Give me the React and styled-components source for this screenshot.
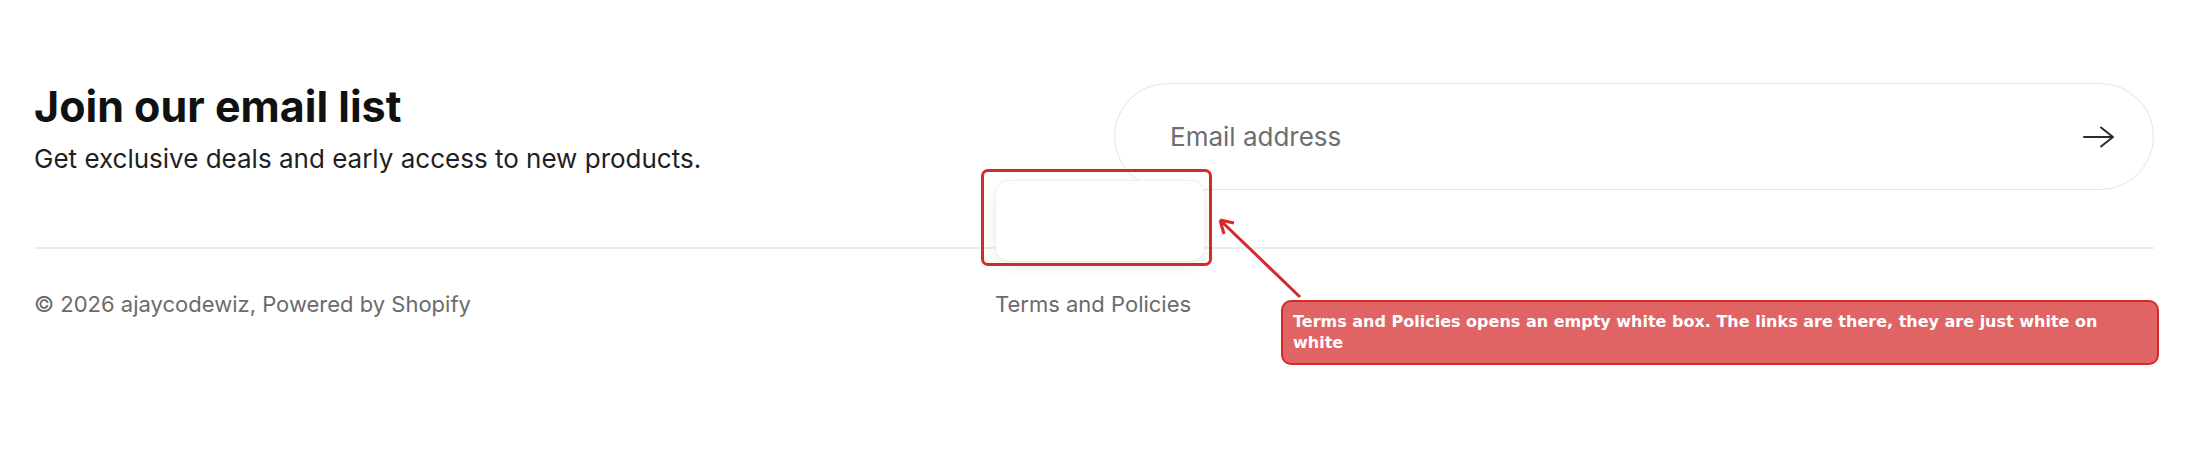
import React from "react";
import styled, { createGlobalStyle } from "styled-components";

const GlobalStyle = createGlobalStyle`
  * { box-sizing: border-box; }
  body {
    margin: 0;
    background: #ffffff;
    font-family: Inter, "Liberation Sans", Arial, sans-serif;
    color: #121212;
  }
`;

const Page = styled.div`
  position: relative;
  width: 2200px;
  height: 460px;
  padding: 80px 46px 0 34px;
`;

const Signup = styled.section`
  display: grid;
  grid-template-columns: 1fr 1040px;
  align-items: start;
`;

const Intro = styled.div`
  display: flex;
  flex-direction: column;
  gap: 10px;
`;

const Title = styled.h2`
  margin: 0;
  font-size: 43px;
  line-height: 52px;
  font-weight: 700;
  letter-spacing: 0;
  color: #111;
`;

const Lead = styled.p`
  margin: 0;
  font-size: 26px;
  line-height: 34px;
  color: #1f1f1f;
`;

const EmailForm = styled.form`
  margin-top: 3px;
  height: 107px;
  display: flex;
  align-items: center;
  padding: 0 38px 0 53px;
  border: 1px solid #e4e4e4;
  border-radius: 60px;
  background: #fff;
`;

const EmailInput = styled.input`
  flex: 1;
  border: 0;
  outline: none;
  background: transparent;
  font-family: inherit;
  font-size: 26px;
  color: #121212;
  &::placeholder { color: #6e6e6e; }
`;

const SubmitButton = styled.button`
  display: flex;
  align-items: center;
  justify-content: center;
  border: 0;
  padding: 0;
  background: none;
  color: #2b2b2b;
  cursor: pointer;
`;

const Divider = styled.hr`
  margin: 57px 0 0;
  border: 0;
  border-top: 2px solid #ececec;
`;

const FooterBar = styled.footer`
  display: grid;
  grid-template-columns: 961px 1fr;
  align-items: center;
  padding-top: 39px;
  font-size: 22px;
  line-height: 33px;
  color: #6b6b6b;
`;

const PolicyMenu = styled.div`
  position: relative;
`;

const PolicyLink = styled.button`
  border: 0;
  padding: 0;
  background: none;
  font: inherit;
  color: inherit;
  cursor: pointer;
`;

const Popover = styled.ul`
  position: absolute;
  left: 0;
  bottom: calc(100% + 26px);
  width: 210px;
  height: 82px;
  margin: 0;
  padding: 12px 20px;
  list-style: none;
  background: #fff;
  border: 1px solid #f0f0f0;
  border-radius: 14px;
  box-shadow: 0 4px 14px rgba(0, 0, 0, 0.08);
  li { color: #fff; }
`;

const Highlight = styled.div`
  position: absolute;
  left: 981px;
  top: 169px;
  width: 231px;
  height: 97px;
  border: 3px solid #d42a2a;
  border-radius: 7px;
`;

const Pointer = styled.svg`
  position: absolute;
  left: 1200px;
  top: 200px;
  overflow: visible;
`;

const Note = styled.div`
  position: absolute;
  left: 1281px;
  top: 300px;
  width: 878px;
  height: 65px;
  padding: 9px 12px 0 10px;
  background: #e06464;
  border: 2px solid #d42a2a;
  border-radius: 10px;
  color: #fff;
  font-family: "DejaVu Sans", sans-serif;
  font-weight: 700;
  font-size: 16px;
  line-height: 21px;
`;

const ArrowRight = () => (
  <svg width="32" height="22" viewBox="0 0 32 22" fill="none">
    <path
      d="M1 11H30M18 1.5L30 11L18 20.5"
      stroke="currentColor"
      strokeWidth="2"
      strokeLinecap="round"
      strokeLinejoin="round"
    />
  </svg>
);

export default function App() {
  // the menu renders, but its links end up white on white
  const policies = ["Privacy policy", "Refund policy", "Terms of service"];

  return (
    <Page>
      <GlobalStyle />
      <Signup>
        <Intro>
          <Title>Join our email list</Title>
          <Lead>Get exclusive deals and early access to new products.</Lead>
        </Intro>
        <EmailForm onSubmit={(e) => e.preventDefault()}>
          <EmailInput type="email" placeholder="Email address" />
          <SubmitButton type="submit" aria-label="Subscribe">
            <ArrowRight />
          </SubmitButton>
        </EmailForm>
      </Signup>
      <Divider />
      <FooterBar>
        <span>© 2026 ajaycodewiz, Powered by Shopify</span>
        <PolicyMenu>
          <Popover aria-hidden="true">
            {policies.slice(0, 0).map((p) => (
              <li key={p}>{p}</li>
            ))}
          </Popover>
          <PolicyLink>Terms and Policies</PolicyLink>
        </PolicyMenu>
      </FooterBar>

      <Highlight />
      <Pointer width="120" height="110">
        <path
          d="M100 97L20 20M20 20L34 23M20 20L24 34"
          stroke="#d42a2a"
          strokeWidth="3"
          fill="none"
        />
      </Pointer>
      <Note>
        Terms and Policies opens an empty white box. The links are there, they
        are just white on white
      </Note>
    </Page>
  );
}
